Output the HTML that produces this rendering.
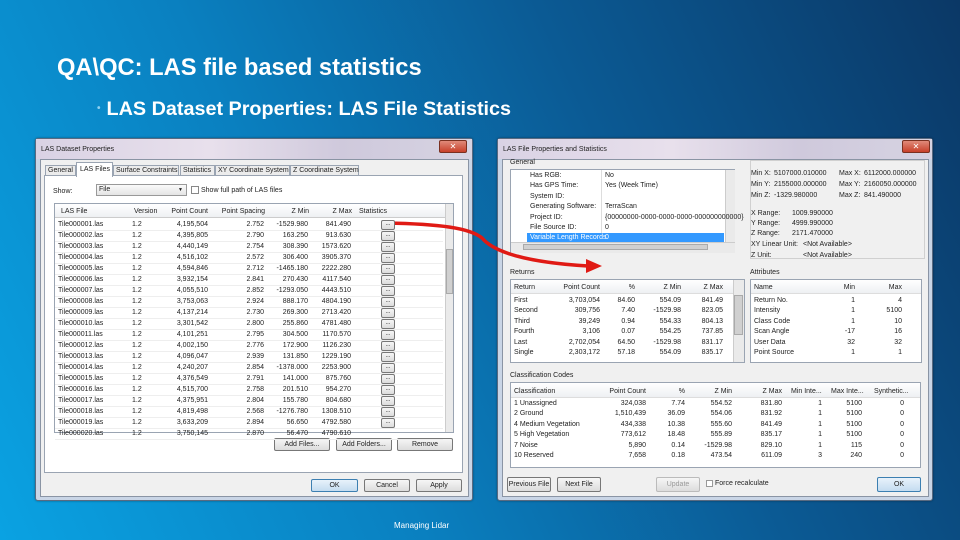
<!DOCTYPE html>
<html><head><meta charset="utf-8"><style>
*{margin:0;padding:0;box-sizing:border-box}
body{width:960px;height:540px;overflow:hidden;position:relative;font-family:"Liberation Sans",sans-serif;
background:linear-gradient(65deg,#0aa2e2 0%,#0a80c0 35%,#0b5a94 65%,#0b3866 100%)}
.a{position:absolute;white-space:nowrap}
.t{font-size:7px;color:#222;line-height:9px}
.dlg{position:absolute;background:#c9d5e6;border:1px solid #5a6a80;border-radius:3px;box-shadow:0 0 2px rgba(0,0,0,.4)}
.tb{position:absolute;left:0;right:0;top:0;height:20px;background:linear-gradient(90deg,#d9d2e4,#e8e0ec 40%,#cfc9dc 70%,#d6d3e2)}
.x{position:absolute;top:1px;width:28px;height:13px;background:linear-gradient(#e08a7a,#c8402a);border:1px solid #7a3020;border-radius:2px;color:#fff;font-size:8px;text-align:center;line-height:11px}
.cl{position:absolute;background:#f0f0f0;border:1px solid #8a94a4}
.w{position:absolute;background:#fff;border:1px solid #9aa4b2}
.btn{position:absolute;background:linear-gradient(#f6f6f6,#dcdcdc);border:1px solid #777;border-radius:2px;font-size:7px;text-align:center;color:#222}
.r{text-align:right}
.sb{position:absolute;background:#eaeaea;border-left:1px solid #ccc}
</style></head><body>

<div class="a" style="left:57px;top:55px;font-size:23.7px;font-weight:bold;color:#fff">QA\QC: LAS file based statistics</div>
<div class="a" style="left:97px;top:98px;font-size:19.8px;font-weight:bold;color:#fff"><span style="color:#8fd0f0;font-size:10px;vertical-align:4px;margin-right:6px">•</span>LAS Dataset Properties: LAS File Statistics</div>
<div class="a" style="left:394px;top:521px;font-size:8px;color:#fff">Managing Lidar</div>

<!-- Dialog 1 -->
<div class="dlg" style="left:35px;top:138px;width:438px;height:363px">
<div class="tb"></div>
<div class="a t" style="left:5px;top:6px">LAS Dataset Properties</div>
<div class="x" style="left:403px">✕</div>
<div class="cl" style="left:4px;top:20px;width:429px;height:338px"></div>
</div>
<div class="a" style="left:44px;top:175px;width:419px;height:298px;background:#fff;border:1px solid #9aa4b2"></div>
<div class="a t" style="left:45px;top:165px;width:31px;height:11px;border:1px solid #9aa4b2;background:#ececec;padding-left:2px">General</div>
<div class="a t" style="left:76px;top:162px;width:37px;height:15px;border:1px solid #9aa4b2;border-bottom:none;background:#fff;padding:2px 0 0 3px">LAS Files</div>
<div class="a t" style="left:113px;top:165px;width:66px;height:11px;border:1px solid #9aa4b2;background:#ececec;padding-left:2px">Surface Constraints</div>
<div class="a t" style="left:180px;top:165px;width:35px;height:11px;border:1px solid #9aa4b2;background:#ececec;padding-left:2px">Statistics</div>
<div class="a t" style="left:215px;top:165px;width:75px;height:11px;border:1px solid #9aa4b2;background:#ececec;padding-left:2px">XY Coordinate System</div>
<div class="a t" style="left:290px;top:165px;width:69px;height:11px;border:1px solid #9aa4b2;background:#ececec;padding-left:2px">Z Coordinate System</div>
<div class="a t" style="left:53px;top:187px">Show:</div>
<div class="a t" style="left:96px;top:184px;width:91px;height:12px;border:1px solid #999;background:linear-gradient(#fafafa,#e4e4e4);padding-left:2px;line-height:10px">File<span style="position:absolute;right:3px;font-size:5px">▼</span></div>
<div class="a" style="left:191px;top:186px;width:8px;height:8px;border:1px solid #888;background:#fff"></div>
<div class="a t" style="left:201px;top:186px">Show full path of LAS files</div>
<div class="w" style="left:54px;top:203px;width:400px;height:230px;overflow:hidden">
<div class="a" style="left:0;top:0;width:390px;height:14px;background:linear-gradient(#fff,#eef0f3);border-bottom:1px solid #ccc"></div>
<div class="a t" style="left:6px;top:3px">LAS File</div><div class="a t" style="left:79px;top:3px">Version</div>
<div class="a t r" style="left:110px;top:3px;width:43px">Point Count</div><div class="a t r" style="left:160px;top:3px;width:50px">Point Spacing</div>
<div class="a t r" style="left:210px;top:3px;width:44px">Z Min</div><div class="a t r" style="left:254px;top:3px;width:43px">Z Max</div>
<div class="a t" style="left:304px;top:3px">Statistics</div>
<div class="sb" style="left:390px;top:0;width:9px;height:229px"></div>
<div class="a" style="left:391px;top:45px;width:7px;height:45px;background:#d0d0d0;border:1px solid #aaa"></div>
</div>
<div class="btn" style="left:274px;top:438px;width:56px;height:13px;line-height:11px">Add Files...</div>
<div class="btn" style="left:336px;top:438px;width:56px;height:13px;line-height:11px">Add Folders...</div>
<div class="btn" style="left:397px;top:438px;width:56px;height:13px;line-height:11px">Remove</div>
<div class="btn" style="left:311px;top:479px;width:47px;height:13px;line-height:11px;background:linear-gradient(#e8f2fb,#c4dcf0);border-color:#3c7fb1">OK</div>
<div class="btn" style="left:364px;top:479px;width:46px;height:13px;line-height:11px">Cancel</div>
<div class="btn" style="left:416px;top:479px;width:46px;height:13px;line-height:11px">Apply</div>

<!-- Dialog 2 -->
<div class="dlg" style="left:497px;top:138px;width:436px;height:363px">
<div class="tb"></div>
<div class="a t" style="left:5px;top:6px">LAS File Properties and Statistics</div>
<div class="x" style="left:404px">✕</div>
<div class="cl" style="left:4px;top:20px;width:427px;height:338px"></div>
</div>
<div class="a t" style="left:510px;top:158px">General</div>
<div class="w" style="left:510px;top:169px;width:225px;height:84px">
<div class="a" style="left:90px;top:0;width:1px;height:70px;background:#ddd"></div>
<div class="a" style="left:16px;top:63px;width:197px;height:10px;background:#3399ff"></div>
<div class="sb" style="left:214px;top:0;width:10px;height:72px"></div>
<div class="a" style="left:0;top:72px;width:224px;height:11px;background:#eaeaea;border-top:1px solid #ccc"></div>
<div class="a" style="left:12px;top:74px;width:185px;height:6px;background:#d0d0d0;border:1px solid #aaa"></div>
</div>
<div class="a" style="left:750px;top:160px;width:175px;height:99px;border:1px solid #d0d0d0"></div>
<div class="a t" style="left:510px;top:268px">Returns</div>
<div class="w" style="left:510px;top:279px;width:235px;height:84px;overflow:hidden">
<div class="a" style="left:0;top:0;width:222px;height:14px;background:linear-gradient(#fff,#eef0f3);border-bottom:1px solid #ddd"></div>
<div class="sb" style="left:222px;top:0;width:11px;height:83px"></div>
<div class="a" style="left:223px;top:15px;width:9px;height:40px;background:#d0d0d0;border:1px solid #aaa"></div>
</div>
<div class="a t" style="left:750px;top:268px">Attributes</div>
<div class="w" style="left:750px;top:279px;width:172px;height:84px">
<div class="a" style="left:0;top:0;width:170px;height:14px;background:linear-gradient(#fff,#eef0f3);border-bottom:1px solid #ddd"></div>
</div>
<div class="a t" style="left:510px;top:371px">Classification Codes</div>
<div class="w" style="left:510px;top:382px;width:411px;height:86px">
<div class="a" style="left:0;top:0;width:409px;height:15px;background:linear-gradient(#fff,#eef0f3);border-bottom:1px solid #ddd"></div>
</div>
<div class="btn" style="left:507px;top:477px;width:44px;height:15px;line-height:13px">Previous File</div>
<div class="btn" style="left:557px;top:477px;width:44px;height:15px;line-height:13px">Next File</div>
<div class="btn" style="left:656px;top:477px;width:44px;height:15px;line-height:13px;color:#999;border-color:#bbb">Update</div>
<div class="a" style="left:706px;top:480px;width:7px;height:7px;border:1px solid #999;background:#fff"></div>
<div class="a t" style="left:715px;top:479px">Force recalculate</div>
<div class="btn" style="left:877px;top:477px;width:44px;height:15px;line-height:13px;background:linear-gradient(#e8f2fb,#c4dcf0);border-color:#3c7fb1">OK</div>

<svg class="a" style="left:0;top:0" width="960" height="540">
<path d="M386 223 C 440 224, 470 228, 482 238 C 492 250, 520 262, 588 266" fill="none" stroke="#e01a14" stroke-width="3.5"/>
<path d="M586 259 L602 266 L586 273 Z" fill="#e01a14"/>
</svg>

<script>
function T(x,y,s,c,w,r){var d=document.createElement('div');d.className='a t'+(r?' r':'');d.style.left=x+'px';d.style.top=y+'px';if(w)d.style.width=w+'px';if(c)d.style.color=c;d.textContent=s;document.body.appendChild(d);}
var f=[["4,195,504","2.752","-1529.980","841.490"],["4,395,805","2.790","163.250","913.630"],["4,440,149","2.754","308.390","1573.620"],["4,516,102","2.572","306.400","3905.370"],["4,594,846","2.712","-1465.180","2222.280"],["3,932,154","2.841","270.430","4117.540"],["4,055,510","2.852","-1293.050","4443.510"],["3,753,063","2.924","888.170","4804.190"],["4,137,214","2.730","269.300","2713.420"],["3,301,542","2.800","255.860","4781.480"],["4,101,251","2.795","304.500","1170.570"],["4,002,150","2.776","172.900","1126.230"],["4,096,047","2.939","131.850","1229.190"],["4,240,207","2.854","-1378.000","2253.900"],["4,376,549","2.791","141.000","875.760"],["4,515,700","2.758","201.510","954.270"],["4,375,951","2.804","155.780","804.680"],["4,819,498","2.568","-1276.780","1308.510"],["3,633,209","2.894","56.650","4792.580"],["3,750,145","2.870","56.470","4790.610"]];
for(var i=0;i<f.length;i++){var y=220+i*11;var n=('0'+(i+1)).slice(-2);
T(58,y,'Tile0000'+n+'.las');T(132,y,'1.2');T(160,y,f[i][0],0,48,1);T(214,y,f[i][1],0,50,1);T(258,y,f[i][2],0,50,1);T(300,y,f[i][3],0,51,1);
if(i<19){var b=document.createElement('div');b.className='btn';b.style.cssText='left:381px;top:'+(y)+'px;width:14px;height:10px;font-size:6px;line-height:6px';b.textContent='...';document.body.appendChild(b);}
var l=document.createElement('div');l.className='a';l.style.cssText='left:55px;top:'+(y+10)+'px;width:388px;height:1px;background:#eee';document.body.appendChild(l);}
var g=[["Has RGB:","No"],["Has GPS Time:","Yes (Week Time)"],["System ID:",""],["Generating Software:","TerraScan"],["Project ID:","{00000000-0000-0000-0000-000000000000}"],["File Source ID:","0"],["Variable Length Records","0"]];
for(i=0;i<g.length;i++){var c=i==6?'#fff':0;T(530,171+i*10.4,g[i][0],c);T(605,171+i*10.4,g[i][1],c);}
var e=[["Min X:","5107000.010000","Max X:","6112000.000000"],["Min Y:","2155000.000000","Max Y:","2160050.000000"],["Min Z:","-1329.980000","Max Z:","841.490000"]];
for(i=0;i<3;i++){T(751,169+i*11,e[i][0]);T(774,169+i*11,e[i][1]);T(839,169+i*11,e[i][2]);T(864,169+i*11,e[i][3]);}
T(751,209,'X Range:');T(792,209,'1009.990000');T(751,219,'Y Range:');T(792,219,'4999.990000');T(751,229,'Z Range:');T(792,229,'2171.470000');
T(751,240,'XY Linear Unit:');T(803,240,'<Not Available>');T(751,251,'Z Unit:');T(803,251,'<Not Available>');
T(514,283,'Return');T(555,283,'Point Count',0,45,1);T(605,283,'%',0,30,1);T(640,283,'Z Min',0,41,1);T(685,283,'Z Max',0,38,1);
var r=[["First","3,703,054","84.60","554.09","841.49"],["Second","309,756","7.40","-1529.98","823.05"],["Third","39,249","0.94","554.33","804.13"],["Fourth","3,106","0.07","554.25","737.85"],["Last","2,702,054","64.50","-1529.98","831.17"],["Single","2,303,172","57.18","554.09","835.17"]];
for(i=0;i<6;i++){var y=296+i*10.4;T(514,y,r[i][0]);T(555,y,r[i][1],0,45,1);T(605,y,r[i][2],0,30,1);T(640,y,r[i][3],0,41,1);T(685,y,r[i][4],0,38,1);}
T(754,283,'Name');T(830,283,'Min',0,25,1);T(877,283,'Max',0,25,1);
var at=[["Return No.","1","4"],["Intensity","1","5100"],["Class Code","1","10"],["Scan Angle","-17","16"],["User Data","32","32"],["Point Source","1","1"]];
for(i=0;i<6;i++){var y=296+i*10.4;T(754,y,at[i][0]);T(830,y,at[i][1],0,25,1);T(877,y,at[i][2],0,25,1);}
T(514,387,'Classification');T(600,387,'Point Count',0,46,1);T(655,387,'%',0,30,1);T(690,387,'Z Min',0,42,1);T(740,387,'Z Max',0,42,1);T(791,387,'Min Inte...');T(831,387,'Max Inte...');T(874,387,'Synthetic...');
var cc=[["1 Unassigned","324,038","7.74","554.52","831.80","1","5100","0"],["2 Ground","1,510,439","36.09","554.06","831.92","1","5100","0"],["4 Medium Vegetation","434,338","10.38","555.60","841.49","1","5100","0"],["5 High Vegetation","773,612","18.48","555.89","835.17","1","5100","0"],["7 Noise","5,890","0.14","-1529.98","829.10","1","115","0"],["10 Reserved","7,658","0.18","473.54","611.09","3","240","0"]];
for(i=0;i<6;i++){var y=399+i*10.4,q=cc[i];T(514,y,q[0]);T(600,y,q[1],0,46,1);T(655,y,q[2],0,30,1);T(690,y,q[3],0,42,1);T(740,y,q[4],0,42,1);T(800,y,q[5],0,22,1);T(840,y,q[6],0,22,1);T(880,y,q[7],0,24,1);}
</script>
</body></html>
